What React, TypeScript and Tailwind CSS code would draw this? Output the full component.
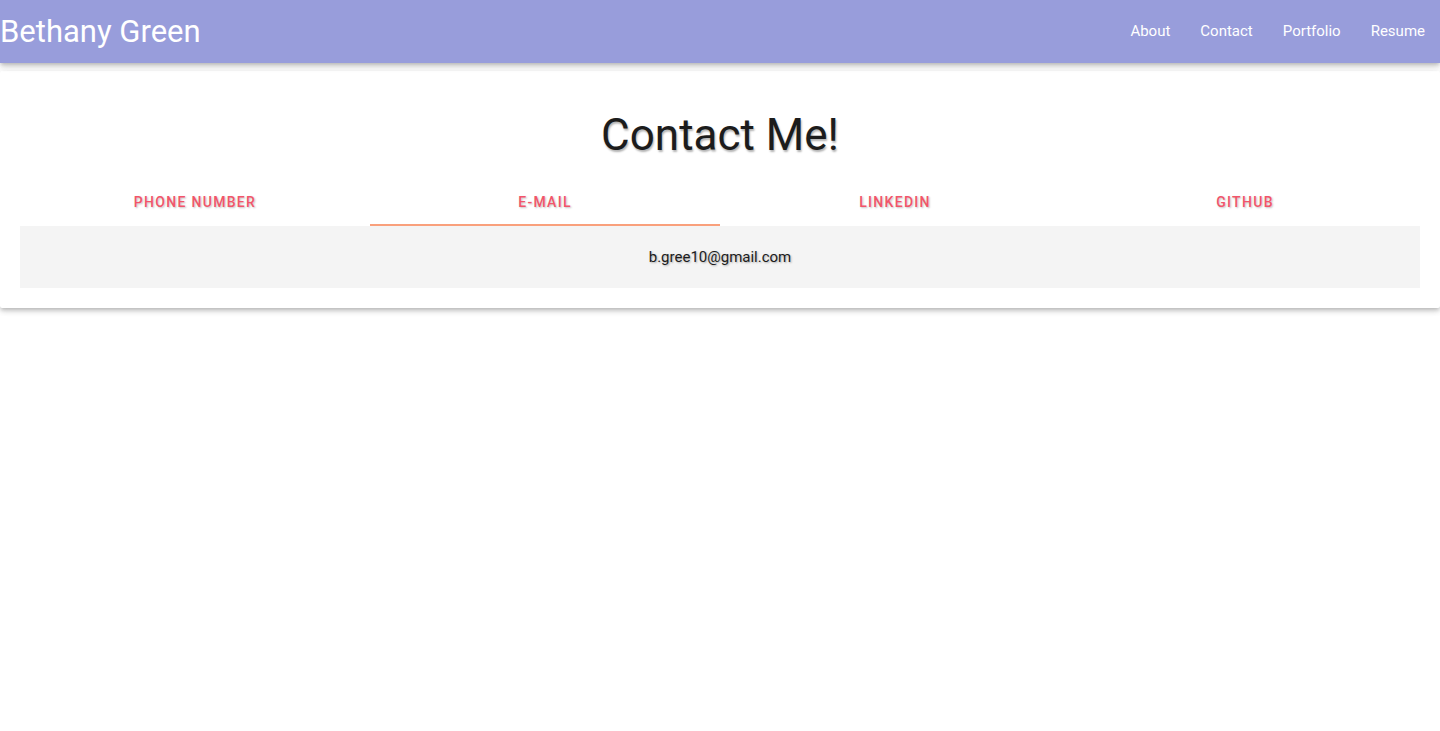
import { useState } from "react";

const links = ["About", "Contact", "Portfolio", "Resume"];

const tabs = [
  { id: "phone", label: "Phone Number", content: "(555) 555-5555" },
  { id: "email", label: "E-mail", content: "b.gree10@gmail.com" },
  { id: "linkedin", label: "LinkedIn", content: "linkedin.com/in/bethanygreen" },
  { id: "github", label: "GitHub", content: "github.com/bgree10" },
];

export default function App() {
  const [active, setActive] = useState("email");
  const current = tabs.find((t) => t.id === active);

  return (
    <div className="min-h-screen bg-white font-['Roboto',sans-serif]">
      <nav className="relative z-10 flex h-[63px] items-center justify-between bg-[#989ddb] shadow-[0_4px_5px_0_rgba(0,0,0,0.1),0_1px_10px_0_rgba(0,0,0,0.08),0_2px_4px_-1px_rgba(0,0,0,0.2)]">
        <a href="#" className="text-[31px] leading-none text-white">
          Bethany Green
        </a>
        <ul className="flex h-full items-center">
          {links.map((link) => (
            <li key={link}>
              <a href="#" className="block px-[15px] text-[15px] text-white">
                {link}
              </a>
            </li>
          ))}
        </ul>
      </nav>

      <main className="mt-2 rounded-[2px] bg-white p-5 shadow-[0_4px_5px_0_rgba(0,0,0,0.1),0_1px_10px_0_rgba(0,0,0,0.08),0_2px_4px_-1px_rgba(0,0,0,0.2)]">
        <div className="flex h-[87px] items-center justify-center">
          <h3 className="text-[44px] leading-none text-[#1c1c1c] [text-shadow:1px_2px_2px_rgba(0,0,0,0.3)]">
            Contact Me!
          </h3>
        </div>

        <ul className="flex h-12">
          {tabs.map((tab) => (
            <li key={tab.id} className="relative flex-1">
              <button
                onClick={() => setActive(tab.id)}
                className="flex h-full w-full items-center justify-center text-sm font-medium uppercase tracking-[1.3px] text-[#f2556a] [text-shadow:1px_1px_2px_rgba(0,0,0,0.25)]"
              >
                {tab.label}
              </button>
              {active === tab.id && (
                <span className="absolute bottom-0 left-0 h-[2px] w-full bg-[#f9a07c]" />
              )}
            </li>
          ))}
        </ul>

        <div className="flex h-[62px] items-center justify-center bg-[#f4f4f4] text-[15px] text-[#1c1c1c] [text-shadow:1px_1px_2px_rgba(0,0,0,0.3)]">
          {current?.content}
        </div>
      </main>
    </div>
  );
}
